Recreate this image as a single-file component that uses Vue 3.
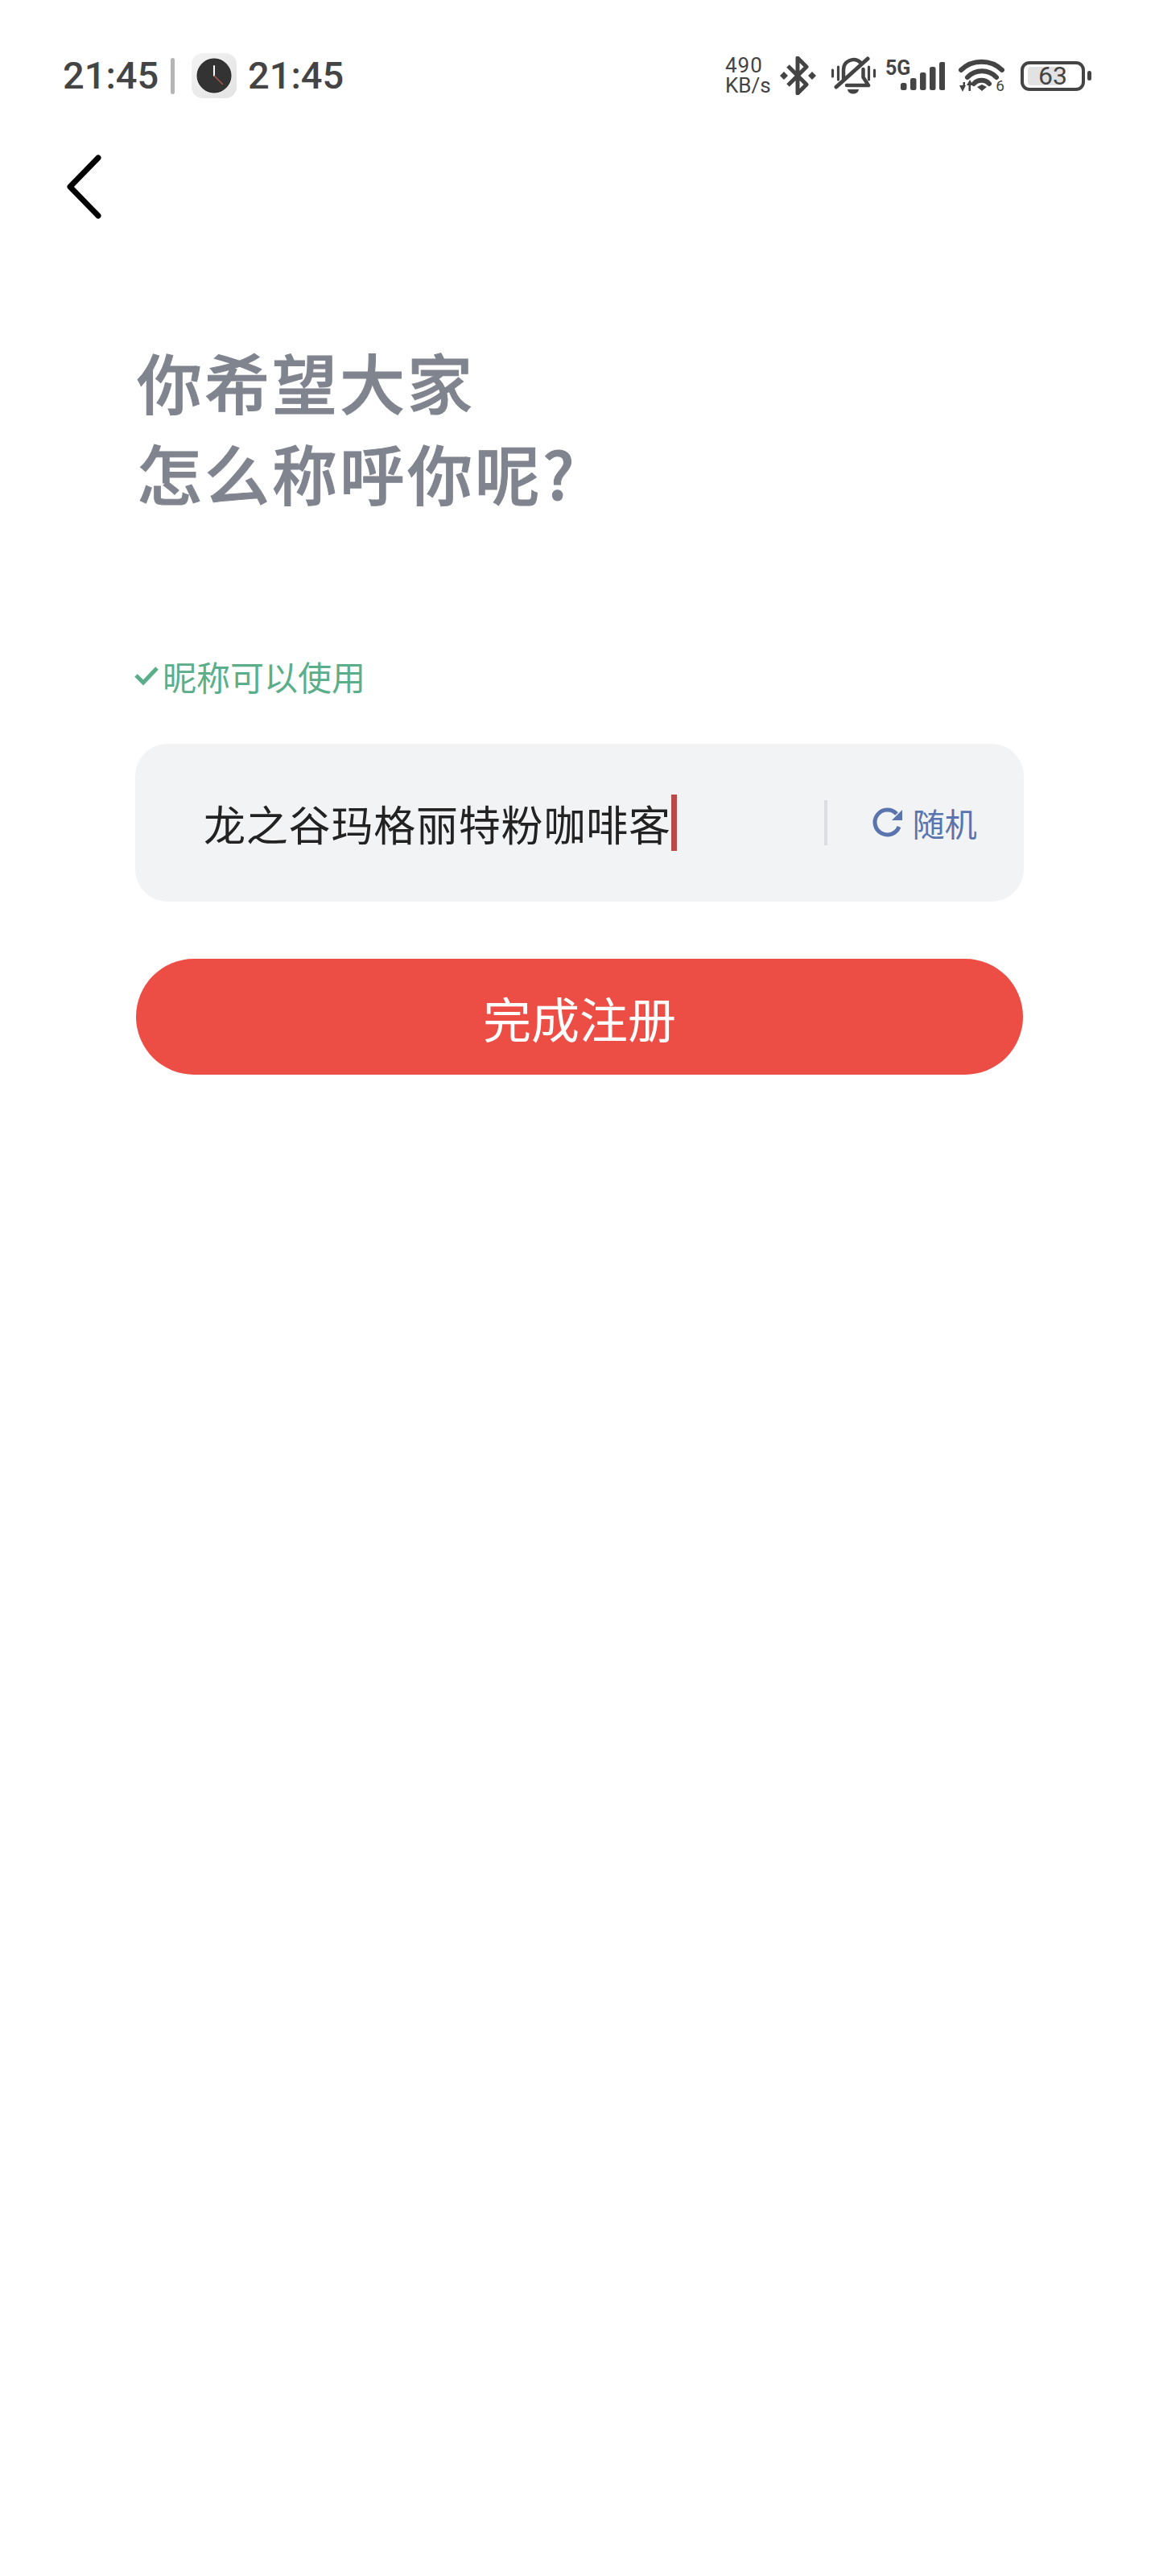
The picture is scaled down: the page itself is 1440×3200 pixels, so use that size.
<script setup>
const nickname = '龙之谷玛格丽特粉咖啡客'
const bars = [
  { x: 0, y: 26, h: 9 },
  { x: 12, y: 20, h: 15 },
  { x: 24, y: 13, h: 22 },
  { x: 36, y: 6, h: 29 },
  { x: 48, y: 0, h: 35 }
]
</script>

<template>
  <div class="page">
    <div class="status-bar">
      <div class="status-left">
        <span class="time">21:45</span>
        <i class="status-divider"></i>
        <span class="clock-tile">
          <svg width="44" height="44" viewBox="0 0 44 44">
            <circle cx="22" cy="22" r="21" fill="#333" stroke="#222" stroke-width="1" />
            <path d="M22 10V22" stroke="#fff" stroke-width="2" stroke-linecap="round" />
            <path d="M22 22L33 33" stroke="#a85550" stroke-width="1.5" />
          </svg>
        </span>
        <span class="time">21:45</span>
      </div>

      <div class="status-right">
        <div class="speed">
          <span class="speed-num">490</span>
          <span class="speed-unit">KB/s</span>
        </div>

        <svg class="bluetooth" width="45" height="48" viewBox="0 0 45 48" fill="none">
          <path d="M10 12L33 35L22 46V2L33 13L10 36" stroke="#444" stroke-width="5" stroke-linejoin="round" />
          <path d="M5 19L10 24L5 29L0 24ZM40 19L45 24L40 29L35 24Z" fill="#444" />
        </svg>

        <svg class="bell" width="56" height="48" viewBox="0 0 56 48" fill="none">
          <path d="M1.5 17V25M8.5 13V29M46.5 13V29M53.5 17V25" stroke="#444" stroke-width="3.2" stroke-linecap="round" />
          <path d="M15 28V17A12.5 12.5 0 0 1 36 7.5M39.5 16V26L46 36H19" stroke="#444" stroke-width="4.5" stroke-linecap="round" stroke-linejoin="round" />
          <path d="M6 38L45 3" stroke="#444" stroke-width="5" stroke-linecap="round" />
          <path d="M20 41H34A7 5.5 0 0 1 20 41Z" fill="#444" />
        </svg>

        <div class="signal">
          <span class="network">5G</span>
          <svg width="74" height="40" viewBox="0 0 74 40">
            <rect v-for="bar in bars" :key="bar.x" :x="bar.x + 19" :y="bar.y + 3" width="7.5" :height="bar.h" rx="2.5" fill="#444" />
          </svg>
        </div>

        <div class="wifi">
          <svg width="57" height="44" viewBox="0 0 57 44" fill="none">
            <path d="M3 15A37 37 0 0 1 54 15" stroke="#444" stroke-width="6" stroke-linecap="round" />
            <path d="M11 24A25 25 0 0 1 47 24" stroke="#444" stroke-width="6" stroke-linecap="round" />
            <path d="M19 32A13 13 0 0 1 38 32" stroke="#444" stroke-width="6" stroke-linecap="round" />
            <path d="M23 36L29 33L35 36L29 41Z" fill="#444" />
            <path d="M1 34H9L5 42ZM5.5 30H8V36H5.5ZM10 34H18L14 27ZM12.5 34H15V41H12.5Z" fill="#444" />
          </svg>
          <span class="wifi-gen">6</span>
        </div>

        <div class="battery">
          <div class="battery-body">
            <i class="battery-level"></i>
            <span class="battery-num">63</span>
          </div>
          <i class="battery-nub"></i>
        </div>
      </div>
    </div>

    <button type="button" class="back-btn">
      <svg width="44" height="80" viewBox="0 0 44 80" fill="none">
        <path d="M39 4L4 40L39 76" stroke="#000" stroke-width="7" stroke-linecap="round" stroke-linejoin="round" />
      </svg>
    </button>

    <h1 class="title">你希望大家<br />怎么称呼你呢?</h1>

    <div class="hint">
      <svg width="32" height="26" viewBox="0 0 32 26" fill="none">
        <path d="M3 13L12 22L29 4" stroke="#5bae8a" stroke-width="5" />
      </svg>
      <span>昵称可以使用</span>
    </div>

    <div class="name-box">
      <span class="name-text">{{ nickname }}</span>
      <i class="caret"></i>
      <i class="name-divider"></i>
      <button type="button" class="random-btn">
        <svg width="38" height="38" viewBox="0 0 38 38" fill="none">
          <path d="M33 24A15.5 15.5 0 1 1 30 8" stroke="#5a74ad" stroke-width="5" />
          <path d="M37 3V16H24Z" fill="#5a74ad" />
        </svg>
        <span class="random-text">随机</span>
      </button>
    </div>

    <button type="button" class="submit-btn">完成注册</button>
  </div>
</template>

<style scoped>
.page {
  background: #fff;
  box-sizing: border-box;
  font-family: "Noto Sans CJK SC", "Noto Sans", sans-serif;
  min-height: 3200px;
  width: 1440px;
}

button {
  background: none;
  border: 0;
  font-family: inherit;
  padding: 0;
}

.status-bar {
  align-items: center;
  box-sizing: border-box;
  color: #444;
  display: flex;
  font-family: Roboto, sans-serif;
  height: 188px;
  justify-content: space-between;
  padding: 0 84px 0 78px;
}

.status-left,
.status-right {
  align-items: center;
  display: flex;
}

.time {
  font-size: 47px;
  font-weight: 500;
  line-height: 56px;
  width: 120px;
}

.status-divider {
  background: #b5b5b5;
  border-radius: 3px;
  height: 45px;
  margin: 0 21px 0 14px;
  width: 5px;
}

.clock-tile {
  align-items: center;
  background: linear-gradient(135deg, #f3f3f3, #e3e3e3);
  border-radius: 14px;
  display: flex;
  height: 56px;
  justify-content: center;
  margin-right: 14px;
  width: 56px;
}

.speed {
  display: flex;
  flex-direction: column;
  gap: 2px;
  width: 54px;
}

.speed-num {
  font-size: 26px;
  letter-spacing: 1px;
  line-height: 23px;
}

.speed-unit {
  font-size: 26px;
  line-height: 23px;
  white-space: nowrap;
}

.bluetooth {
  margin-left: 14px;
}

.bell {
  margin-left: 19px;
}

.signal {
  margin-left: 11px;
  position: relative;
}

.signal svg,
.wifi svg {
  display: block;
}

.network {
  font-size: 25px;
  font-weight: 700;
  left: 0;
  line-height: 24px;
  position: absolute;
  top: -1px;
}

.wifi {
  margin-left: 17px;
  position: relative;
}

.wifi-gen {
  bottom: -1px;
  font-size: 19px;
  line-height: 20px;
  position: absolute;
  right: 0;
}

.battery {
  align-items: center;
  display: flex;
  gap: 3px;
  margin-left: 20px;
}

.battery-body {
  border: 4px solid #444;
  border-radius: 11px;
  box-sizing: border-box;
  height: 37px;
  position: relative;
  width: 80px;
}

.battery-level {
  background: #e2e2e2;
  border-radius: 4px;
  bottom: 3px;
  left: 5px;
  position: absolute;
  top: 3px;
  width: 44px;
}

.battery-num {
  font-size: 32px;
  left: 0;
  line-height: 29px;
  position: absolute;
  right: 0;
  text-align: center;
  top: 0;
}

.battery-nub {
  background: #444;
  border-radius: 3px;
  height: 12px;
  width: 5px;
}

.back-btn {
  display: block;
  height: 80px;
  margin: 4px 0 0 83px;
}

.title {
  color: #80848f;
  font-size: 81px;
  font-weight: 500;
  letter-spacing: 3px;
  line-height: 113px;
  margin: 144px 0 0 170px;
  -webkit-text-stroke: 1px #80848f;
}

.hint {
  align-items: center;
  color: #5bae8a;
  display: flex;
  font-size: 42px;
  gap: 4px;
  height: 60px;
  margin: 167px 0 0 166px;
}

.name-box {
  align-items: center;
  background: #f2f3f5;
  border-radius: 40px;
  box-sizing: border-box;
  display: flex;
  height: 196px;
  margin: 55px 0 0 168px;
  padding: 0 40px 0 85px;
  width: 1104px;
}

.name-text {
  color: #222;
  font-size: 52px;
  letter-spacing: 0.8px;
  white-space: nowrap;
}

.caret {
  background: #b94a4a;
  height: 70px;
  margin-right: 183px;
  width: 7px;
}

.name-divider {
  background: #dcdde0;
  height: 56px;
  width: 4px;
}

.random-btn {
  align-items: center;
  color: #5a74ad;
  display: flex;
  flex-shrink: 0;
  font-size: 40px;
  gap: 12px;
  margin-left: 56px;
}

.random-text {
  white-space: nowrap;
}

.submit-btn {
  background: #ec4e46;
  border-radius: 72px;
  color: #fff;
  display: block;
  font-size: 60px;
  height: 144px;
  margin: 71px 0 0 169px;
  width: 1102px;
}
</style>
